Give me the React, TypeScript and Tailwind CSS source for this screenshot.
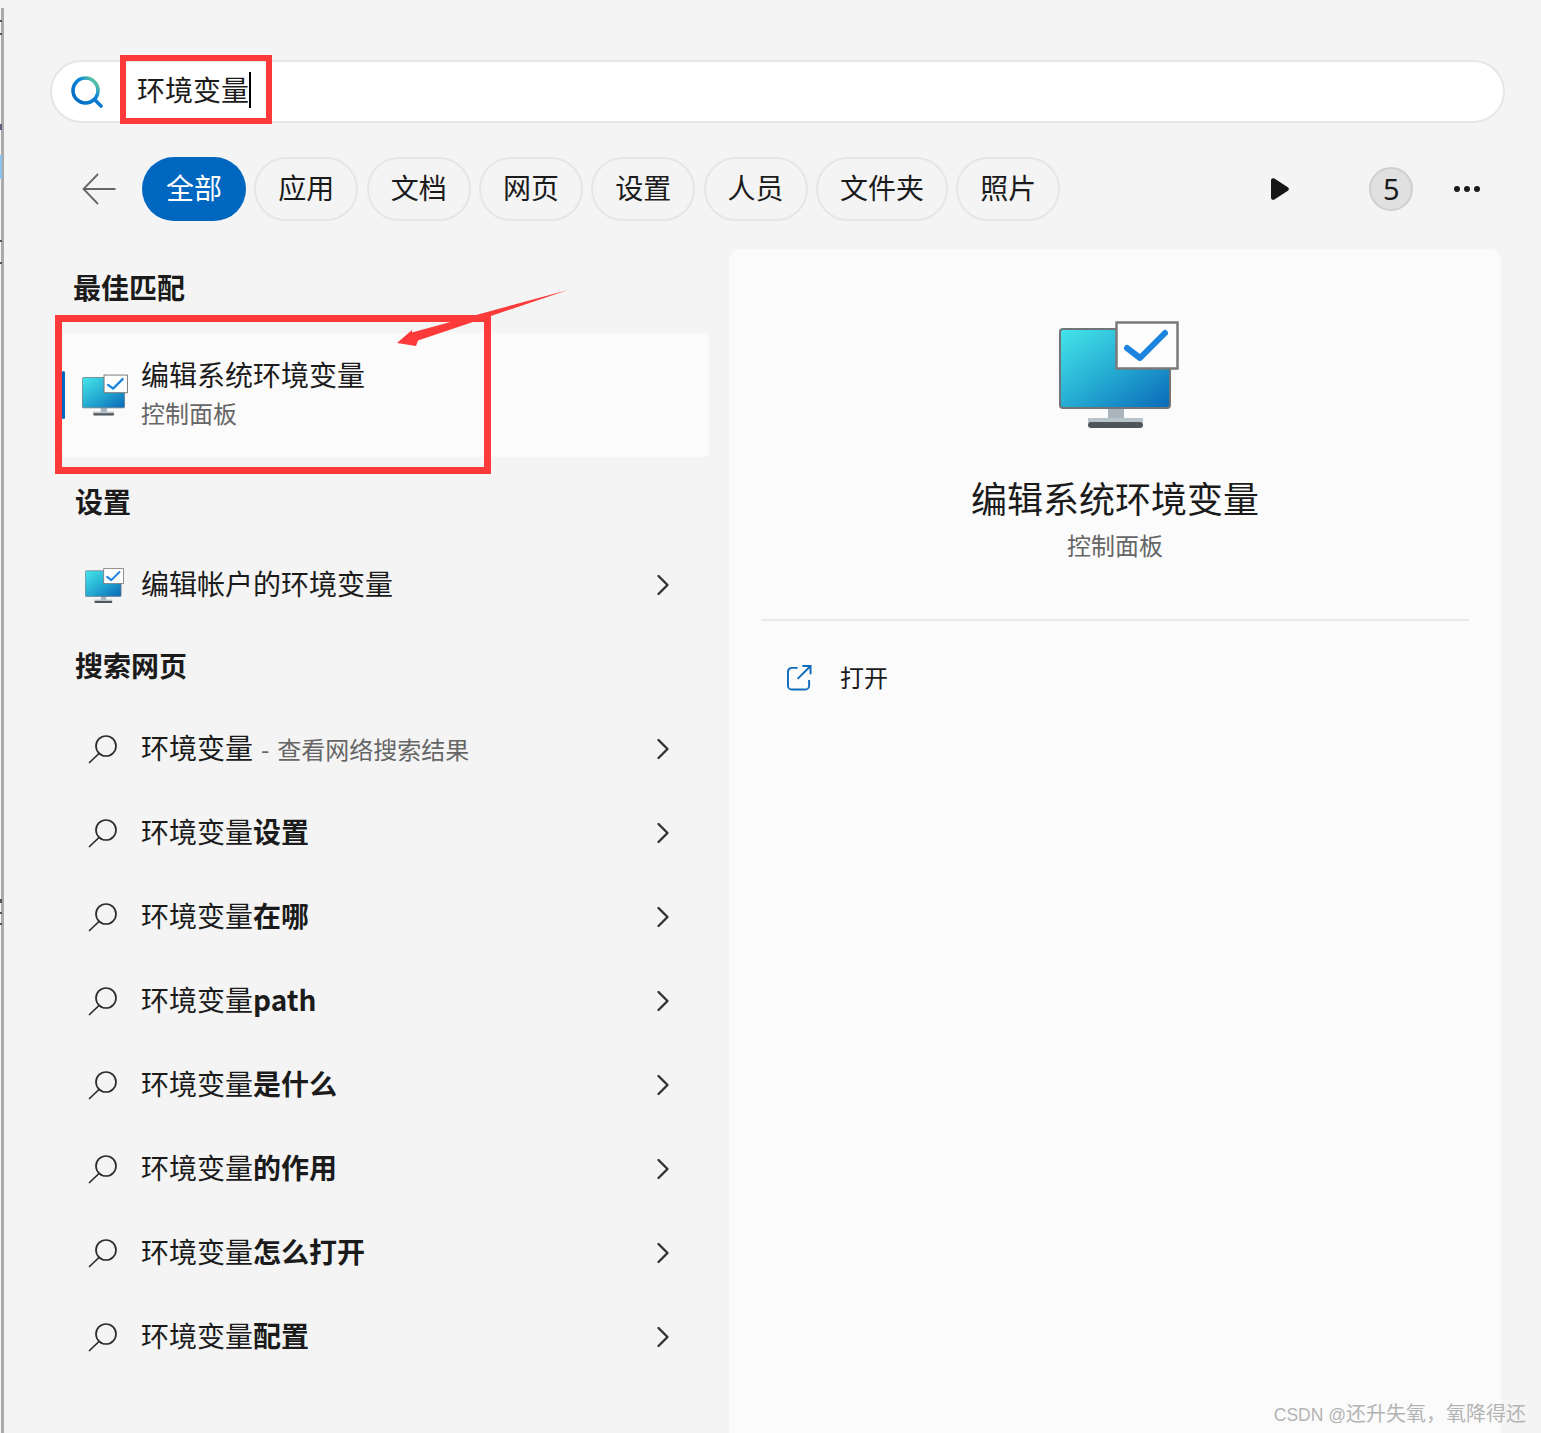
import { FC } from 'react';
import { ChevronRight } from 'lucide-react';

const tabs = ['全部', '应用', '文档', '网页', '设置', '人员', '文件夹', '照片'];

const webResults = [
  { plain: '环境变量', bold: '', hint: '查看网络搜索结果' },
  { plain: '环境变量', bold: '设置' },
  { plain: '环境变量', bold: '在哪' },
  { plain: '环境变量', bold: 'path' },
  { plain: '环境变量', bold: '是什么' },
  { plain: '环境变量', bold: '的作用' },
  { plain: '环境变量', bold: '怎么打开' },
  { plain: '环境变量', bold: '配置' },
];

const MonitorIcon: FC<{ id: string; className: string }> = ({ id, className }) => (
  <svg viewBox="0 0 120 107" className={className}>
    <defs>
      <linearGradient id={id} x1="0" y1="0" x2="1" y2="1">
        <stop offset="0" stopColor="#45e6ea" />
        <stop offset="0.55" stopColor="#22a5d0" />
        <stop offset="1" stopColor="#0a68b8" />
      </linearGradient>
    </defs>
    <rect x="49" y="86" width="16" height="14" fill="#a9b4bc" />
    <rect x="29" y="97" width="55" height="5" fill="#b9c3ca" />
    <rect x="29" y="101" width="55" height="6" rx="3" fill="#4f5559" />
    <rect x="1" y="8" width="110" height="79" rx="3" fill={`url(#${id})`} stroke="#6f7478" strokeWidth="2" />
    <rect x="57.5" y="1.5" width="61" height="46" fill="#fdfdfd" stroke="#7a7a7a" strokeWidth="2.5" />
    <path d="M68 27 L81 37 L106 12" fill="none" stroke="#1c84de" strokeWidth="6" strokeLinecap="round" strokeLinejoin="round" />
  </svg>
);

const SearchLens: FC = () => (
  <svg viewBox="0 0 30 30" className="h-[30px] w-[30px] shrink-0 fill-none stroke-[#2b2b2b] stroke-[1.7]">
    <circle cx="18" cy="12" r="10" />
    <path d="M11 19.5 L1.5 28.5" strokeLinecap="round" />
  </svg>
);

const Row: FC<{ children: React.ReactNode; icon: React.ReactNode }> = ({ children, icon }) => (
  <div className="flex h-[84px] items-center pr-[28px]">
    <div className="flex w-[79px] shrink-0 items-center pl-[26px]">{icon}</div>
    <div className="flex-1 pb-[4px] text-[28px] whitespace-pre text-[#1b1b1b]">{children}</div>
    <ChevronRight className="h-[36px] w-[36px] text-[#333333]" strokeWidth={1.6} />
  </div>
);

export default function App() {
  return (
    <div className="relative h-[1433px] w-[1541px] overflow-hidden bg-[#f4f4f4] font-['Noto_Sans_CJK_SC',sans-serif] text-[#1b1b1b]">
      <div className="pt-[60px] pl-[50px]">
        <div className="flex h-[63px] w-[1455px] items-center rounded-full border-2 border-[#e6e6e6] bg-white pl-[19px]">
          <svg viewBox="0 0 32 32" className="h-[32px] w-[32px] shrink-0 fill-none">
            <defs>
              <linearGradient id="lens" x1="0" y1="1" x2="1" y2="0">
                <stop offset="0" stopColor="#0067c0" />
                <stop offset="0.6" stopColor="#0a86d8" />
                <stop offset="1" stopColor="#7fe08c" />
              </linearGradient>
            </defs>
            <circle cx="14.5" cy="14.5" r="12.5" stroke="url(#lens)" strokeWidth="3.6" />
            <path d="M24 24 L30 30" stroke="#0a78d0" strokeWidth="3.6" strokeLinecap="round" />
          </svg>
          <span className="mb-[5px] ml-[34px] text-[28px]">环境变量</span>
          <span className="mb-[3px] h-[36px] w-[2px] bg-black" />
        </div>
      </div>

      <div className="mt-[34px] flex h-[64px] items-center">
        <div className="ml-[82px] w-[60px]">
          <svg viewBox="0 0 34 32" className="h-[32px] w-[34px] fill-none stroke-[#666666] stroke-[1.8]">
            <path d="M33.5 16 H1.5 M16 1 L1.5 16 L16 31" />
          </svg>
        </div>
        <div className="flex gap-[8.3px]">
          {tabs.map((tab, index) => (
            <div
              key={tab}
              className={
                index === 0
                  ? 'flex h-[64px] items-center rounded-full bg-[#0067c0] px-[24px] pb-[4px] text-[28px] text-white'
                  : 'flex h-[64px] items-center rounded-full border-2 border-[#e6e6e6] px-[22px] pb-[4px] text-[28px]'
              }
            >
              {tab}
            </div>
          ))}
        </div>
        <svg viewBox="0 0 18 22" className="ml-[211px] h-[22px] w-[18px] fill-[#161616]">
          <path d="M0 2.5 C0 0.5 1.8 -0.4 3.4 0.6 L16.5 9 C18.4 10.2 18.4 11.8 16.5 13 L3.4 21.4 C1.8 22.4 0 21.5 0 19.5 Z" />
        </svg>
        <div className="ml-[80px] flex h-[44px] w-[44px] items-center justify-center rounded-full border-2 border-[#cfcfcf] bg-[#e0e0e0] font-['Noto_Sans',sans-serif] text-[29px] font-normal">
          5
        </div>
        <div className="ml-[41px] flex gap-[4px]">
          <span className="h-[6px] w-[6px] rounded-full bg-[#1b1b1b]" />
          <span className="h-[6px] w-[6px] rounded-full bg-[#1b1b1b]" />
          <span className="h-[6px] w-[6px] rounded-full bg-[#1b1b1b]" />
        </div>
      </div>

      <div className="mt-[28px] flex pl-[62px]">
        <div className="w-[647px]">
          <div className="flex h-[84px] items-center pb-[8px] pl-[11px] text-[28px] font-bold">最佳匹配</div>
          <div className="relative flex h-[124px] items-center rounded-[6px] bg-[#fbfbfb]">
            <span className="absolute top-[38px] left-0 h-[48px] w-[3px] rounded-full bg-[#0067c0]" />
            <div className="ml-[20px] w-[59px] shrink-0">
              <MonitorIcon id="screen-a" className="h-[42px] w-[46px]" />
            </div>
            <div className="pb-[3px]">
              <div className="text-[28px] leading-[39px]">编辑系统环境变量</div>
              <div className="text-[24px] leading-[38px] text-[#666666]">控制面板</div>
            </div>
          </div>
          <div className="flex h-[86px] items-center pt-[2px] pl-[13px] text-[28px] font-bold">设置</div>
          <Row icon={<MonitorIcon id="screen-b" className="ml-[-3px] h-[35px] w-[39px]" />}>编辑帐户的环境变量</Row>
          <div className="flex h-[80px] items-center pb-[4px] pl-[13px] text-[28px] font-bold">搜索网页</div>
          {webResults.map((item) => (
            <Row key={item.plain + item.bold} icon={<SearchLens />}>
              {item.plain}
              <span className="font-bold">{item.bold}</span>
              {item.hint && (
                <span className="ml-[8px] text-[24px] text-[#666666]">
                  -<span className="ml-[8px]">{item.hint}</span>
                </span>
              )}
            </Row>
          ))}
        </div>

        <div className="ml-[20px] flex h-[1184px] w-[772px] flex-col rounded-t-[12px] bg-[#fbfbfb] px-[32px]">
          <div className="flex flex-col items-center border-b-2 border-[#e9e9e9] pt-[72px] pb-[56px]">
            <MonitorIcon id="screen-c" className="ml-[8px] h-[107px] w-[120px]" />
            <div className="mt-[43px] text-[36px] leading-[52px]">编辑系统环境变量</div>
            <div className="mt-[4px] text-[24px] leading-[36px] text-[#666666]">控制面板</div>
          </div>
          <div className="mt-[38px] flex items-center pl-[26px]">
            <svg viewBox="0 0 26 27" className="h-[27px] w-[25px] fill-none stroke-[#0f6cbd] stroke-[2]">
              <path d="M11 3.5 H5 A4 4 0 0 0 1 7.5 V22 A4 4 0 0 0 5 26 H19 A4 4 0 0 0 23 22 V16" />
              <path d="M11 15 L24.5 1.5 M16 1.5 H24.5 V10" />
            </svg>
            <span className="ml-[28px] text-[24px]">打开</span>
          </div>
        </div>
      </div>

      {/* window edge and the bits of desktop peeking out behind it */}
      <div className="absolute top-[8px] left-[1px] h-full w-[2.5px] bg-[#aaaaaa]" />
      <div className="absolute top-[155px] left-0 h-[24px] w-[2px] bg-[#8cc4f0]" />
      <div className="absolute top-[20px] left-0 h-[2px] w-[2px] bg-[#555555]" />
      <div className="absolute top-[33px] left-0 h-[2px] w-[2px] bg-[#555555]" />
      <div className="absolute top-[124px] left-0 h-[6px] w-[2px] bg-[#5a5f7a]" />
      <div className="absolute top-[240px] left-0 h-[2px] w-[2px] bg-[#555555]" />
      <div className="absolute top-[262px] left-0 h-[2px] w-[2px] bg-[#555555]" />
      <div className="absolute top-[899px] left-0 h-[4px] w-[2px] bg-[#555555]" />
      <div className="absolute top-[912px] left-0 h-[2px] w-[2px] bg-[#555555]" />
      <div className="absolute top-[923px] left-0 h-[2px] w-[2px] bg-[#555555]" />

      {/* annotations drawn on top of the screenshot */}
      <div className="absolute top-[55px] left-[120px] h-[69px] w-[152px] border-[6px] border-[#fd3a3a]" />
      <div className="absolute top-[315px] left-[55px] h-[159px] w-[436px] border-[7px] border-[#fd3a3a]" />
      <svg viewBox="0 0 200 70" className="absolute top-[285px] left-[385px] h-[70px] w-[200px] fill-[#fd3a3a]">
        <path d="M12 58 L27 45 L27 47.5 L183 5 L33 55.5 L31 61 Z" />
      </svg>
      <div className="absolute right-[15px] bottom-[4px] font-['Liberation_Sans','Noto_Sans_CJK_SC',sans-serif] text-[20px] text-[#b4b4b4]">
        <span className="text-[17.5px]">CSDN @</span>还升失氧，氧降得还
      </div>
    </div>
  );
}
